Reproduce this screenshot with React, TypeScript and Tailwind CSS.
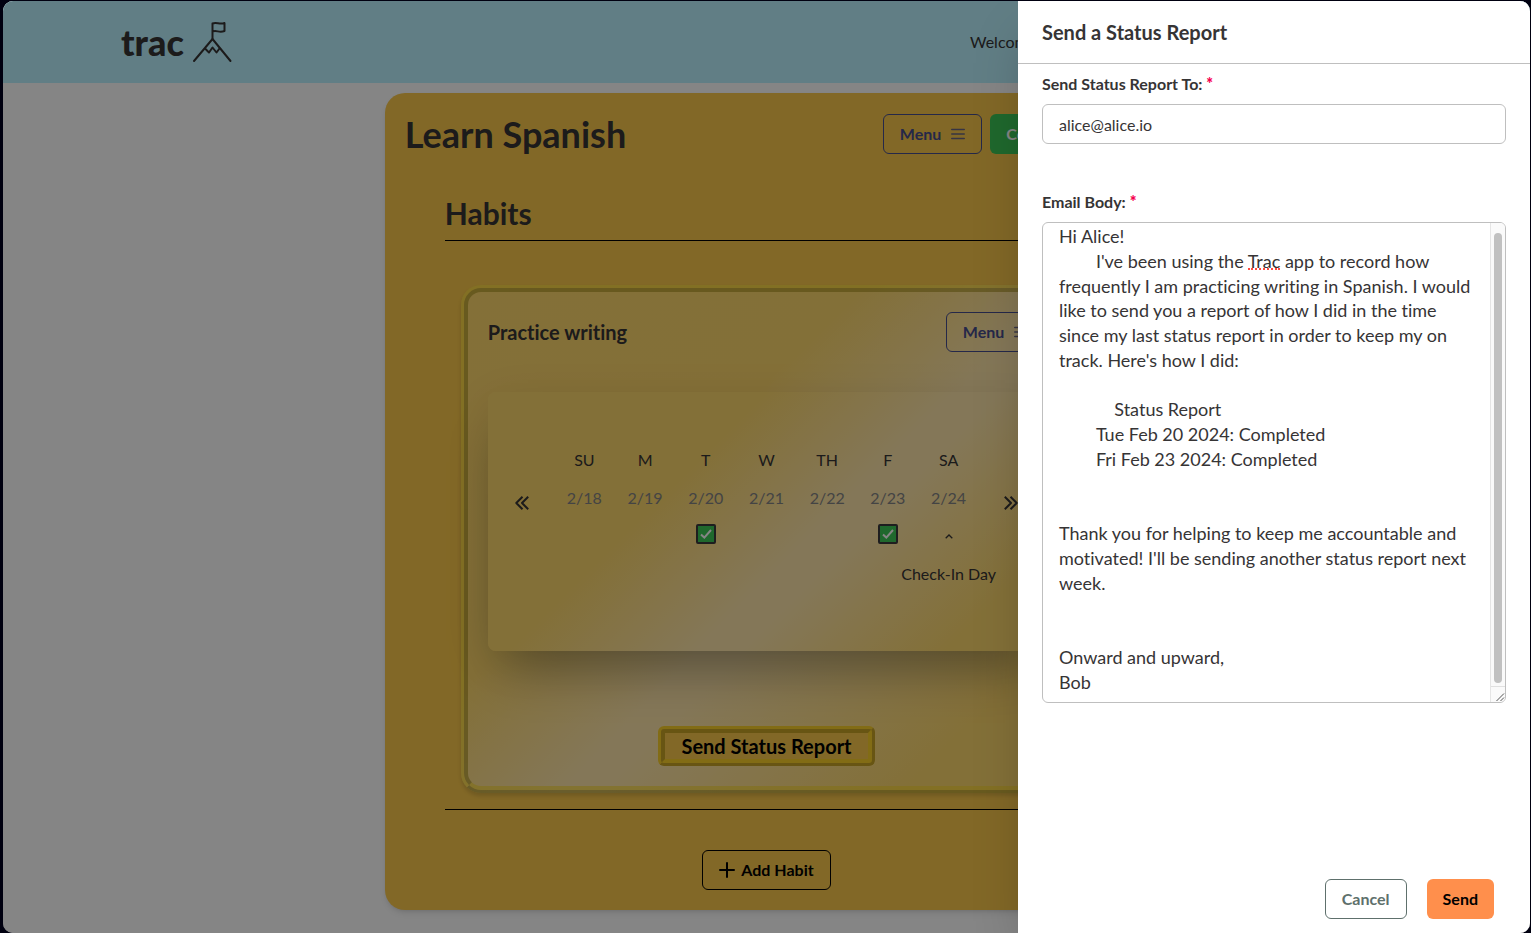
import { useEffect, useRef } from "react";

const days = [
  { name: "SU", date: "2/18" },
  { name: "M", date: "2/19" },
  { name: "T", date: "2/20", done: true },
  { name: "W", date: "2/21" },
  { name: "TH", date: "2/22" },
  { name: "F", date: "2/23", done: true },
  { name: "SA", date: "2/24", checkIn: true },
];

const emailBody = `Hi Alice!
        I've been using the Trac app to record how frequently I am practicing writing in Spanish. I would like to send you a report of how I did in the time since my last status report in order to keep my on track. Here's how I did:

            Status Report
        Tue Feb 20 2024: Completed
        Fri Feb 23 2024: Completed


Thank you for helping to keep me accountable and motivated! I'll be sending another status report next week.


Onward and upward,
Bob`;

function MountainLogo() {
  return (
    <svg viewBox="0 0 40 42" className="h-[42px] w-10" fill="none" stroke="currentColor" strokeWidth="2" strokeLinecap="round" strokeLinejoin="round" aria-hidden="true">
      <path d="M2 40 20.500 18 38.500 40" />
      <path d="M20.500 18V2.500c4-2 7 1.500 12-.5v8c-5 2-8-1-12 .5" />
      <path d="M13.500 28 17 31.500 20.500 26.500 24.500 31.500 27.500 27.500" />
    </svg>
  );
}

function MenuIcon() {
  return (
    <svg viewBox="0 0 14 12" className="h-3 w-3.5" stroke="currentColor" strokeWidth="1.600" strokeLinecap="round" aria-hidden="true">
      <path d="M.8 1.500H13.200M.8 6H13.200M.8 10.500H13.200" />
    </svg>
  );
}

function DoubleChevron({ flip = false }: { flip?: boolean }) {
  return (
    <svg viewBox="0 0 14 14" className={flip ? "size-3.5 rotate-180" : "size-3.5"} fill="none" stroke="currentColor" strokeWidth="2" strokeLinejoin="round" aria-hidden="true">
      <path d="M7.500.8 1.300 7l6.200 6.200M13.200.8 7 7l6.200 6.200" />
    </svg>
  );
}

function MenuButton() {
  return (
    <button className="flex h-10 shrink-0 items-center gap-2.5 rounded-md border border-[#484e8d] px-4 font-bold text-[#484e8d]">
      Menu
      <span className="text-[#6a6480]"><MenuIcon /></span>
    </button>
  );
}

function WeekTable() {
  return (
    <table className="w-[425px] table-fixed border-collapse text-center">
      <thead>
        <tr>
          {days.map((d) => (
            <th key={d.name} className="h-[38px] pb-3.5 font-normal">{d.name}</th>
          ))}
        </tr>
      </thead>
      <tbody>
        <tr className="text-[#838383]">
          {days.map((d) => (
            <td key={d.date} className="h-[38px] pb-3.5">{d.date}</td>
          ))}
        </tr>
        <tr>
          {days.map((d) => (
            <td key={d.date} className="h-5 p-0">
              {d.done && (
                <span className="mx-auto flex size-5 items-center justify-center rounded-xs border-2 border-[#3b3a3d] bg-[#3dc856] text-white">
                  <svg viewBox="0 0 12 10" className="h-2.5 w-3" fill="none" stroke="currentColor" strokeWidth="2" aria-label="Completed">
                    <path d="M1 5.500 4.300 8.600 11 1" />
                  </svg>
                </span>
              )}
              {d.checkIn && (
                <svg viewBox="0 0 8 5" className="mx-auto mt-1 h-[5px] w-2" fill="none" stroke="currentColor" strokeWidth="1.300" aria-hidden="true">
                  <path d="M.7 4.300 4 1l3.300 3.300" />
                </svg>
              )}
            </td>
          ))}
        </tr>
        <tr>
          {days.map((d) => (
            <td key={d.date} className="p-0 pt-[18px]">
              {d.checkIn && <span className="-mx-8 block whitespace-nowrap">Check-In Day</span>}
            </td>
          ))}
        </tr>
      </tbody>
    </table>
  );
}

function Habit() {
  return (
    <article className="mx-4 mt-11 rounded-[20px] border-[7px] border-[rgba(250,216,46,0.6)] bg-[linear-gradient(135deg,#fdd66c_0%,#fcd66b_36%,#fee5a9_54%,#fee5a9_58%,#fcd66b_85%)] bg-origin-border p-5 shadow-[0_3px_4px_rgba(0,0,0,0.15)] [border-style:ridge]">
      <div className="flex items-center justify-between">
        <h3 className="text-xl font-bold">Practice writing</h3>
        <MenuButton />
      </div>
      <div className="mt-10 flex h-[259px] items-start justify-between rounded-lg bg-[linear-gradient(135deg,#fcd66b_0%,#fcd66b_34%,#fee5a9_57%,#fee5a9_63%,#fcd66b_88%)] px-[27px] pt-14 shadow-[0_10px_50px_rgba(0,0,0,0.07),0_30px_50px_-15px_rgba(0,0,0,0.32)]">
        <button aria-label="Previous week" className="mt-12"><DoubleChevron /></button>
        <WeekTable />
        <button aria-label="Next week" className="mt-12"><DoubleChevron flip /></button>
      </div>
      <button className="mx-auto mt-[75px] flex h-10 items-center rounded-md border-[7px] border-[rgba(250,212,20,0.6)] bg-[#fac84b] px-4 text-xl font-bold whitespace-nowrap text-black [border-style:ridge]">
        Send Status Report
      </button>
    </article>
  );
}

function Required() {
  return <span className="font-black text-[#f5004f]">*</span>;
}

function ReportDrawer() {
  const body = useRef<HTMLTextAreaElement>(null);
  useEffect(() => {
    if (body.current) body.current.scrollTop = 9;
  }, []);
  return (
    <section role="dialog" aria-labelledby="drawer-title" className="absolute inset-y-0 right-0 flex w-lg flex-col bg-white shadow-2xl">
      <h2 id="drawer-title" className="border-b border-[#bfbfbf] px-6 py-4 text-xl leading-[30px] font-bold">
        Send a Status Report
      </h2>
      <form className="flex flex-1 flex-col px-6 pt-2 pb-3.5" onSubmit={(e) => e.preventDefault()}>
        <label htmlFor="to" className="font-bold">
          Send Status Report To: <Required />
        </label>
        <input id="to" type="email" defaultValue="alice@alice.io" className="mt-2 h-10 rounded-md border border-[#bfbfbf] px-4" />
        <label htmlFor="body" className="mt-[46px] font-bold">
          Email Body: <Required />
        </label>
        <div className="relative mt-2 flex">
          <textarea
            id="body"
            ref={body}
            defaultValue={emailBody}
            className="h-[481px] w-full resize-none overflow-y-scroll rounded-md border border-[#bfbfbf] py-2 pr-[31px] pl-4 text-lg leading-snug [scrollbar-width:none]"
          />
          <span aria-hidden="true" className="absolute top-[46px] left-[206px] w-8 border-b-2 border-dotted border-[#ff4a40]" />
          <div aria-hidden="true" className="absolute inset-y-px right-px flex w-[15px] flex-col overflow-hidden rounded-r-[5px] border-l border-[#e5e5e5] bg-[#fafafa]">
            <div className="flex-1 px-[3px] pt-2.5 pb-[3px]">
              <div className="h-full rounded-full bg-[#c1c1c1]" />
            </div>
            <div className="flex h-4 items-end justify-end border-t border-[#e0e0e0]">
              <svg viewBox="0 0 10 10" className="size-2.5" stroke="#555" strokeWidth="1">
                <path d="M1.500 9 9 1.500M5.500 9 9 5.500" />
              </svg>
            </div>
          </div>
        </div>
        <div className="mt-auto flex justify-end gap-5 pr-3">
          <button type="button" className="h-10 rounded-md border border-[#5e706c] px-4 font-bold text-[#5e706c]">Cancel</button>
          <button type="submit" className="h-10 rounded-md bg-[#ff8f4c] px-4 font-bold text-black">Send</button>
        </div>
      </form>
    </section>
  );
}

export default function App() {
  return (
    <div className="flex min-h-screen flex-col bg-[#000010] pt-px pr-px pl-[3px] font-['Lato',sans-serif] text-[#363435] [font-variant-ligatures:none]">
      <div className="relative flex-1 overflow-hidden rounded-[10px] bg-white">
        <header className="flex h-[82px] items-center justify-between bg-[#bbf2ff] px-[118px]">
          <a href="#home" className="flex items-center gap-2">
            <span className="text-4xl font-black">trac</span>
            <MountainLogo />
          </a>
          <nav className="w-[442px]">
            <span>Welcome</span>
          </nav>
        </header>
        <main className="mx-auto mt-2.5 mb-5 w-1/2 rounded-[20px] bg-[#fac84b] px-5 pt-[21px] pb-5 shadow-md">
          <div className="flex items-center gap-2">
            <h1 className="mr-auto text-4xl font-bold">Learn Spanish</h1>
            <MenuButton />
            <button className="h-10 w-[138px] rounded-md bg-[#3dc856] px-4 text-left font-bold text-white">Complete</button>
          </div>
          <section className="mx-10 mt-10">
            <h2 className="border-b border-black pb-2 text-3xl leading-[38px] font-bold">Habits</h2>
            <Habit />
            <hr className="mt-4 border-black" />
            <button className="mx-auto mt-10 flex h-10 items-center gap-1.5 rounded-md border border-black px-4 font-bold whitespace-nowrap text-black">
              <svg viewBox="0 0 16 16" className="size-4" stroke="currentColor" strokeWidth="2" strokeLinecap="round" aria-hidden="true">
                <path d="M8 1v14M1 8h14" />
              </svg>
              Add Habit
            </button>
          </section>
        </main>
        <div className="absolute inset-0 bg-black/48" />
        <ReportDrawer />
      </div>
    </div>
  );
}
